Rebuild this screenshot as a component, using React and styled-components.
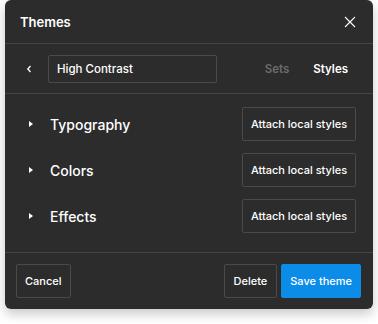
import styled, { createGlobalStyle } from "styled-components";

const GlobalStyle = createGlobalStyle`
  body {
    margin: 0;
    background: #ffffff;
    font-family: Inter, "Noto Sans", sans-serif;
    -webkit-font-smoothing: antialiased;
  }
`;

const Page = styled.div`
  padding: 0 5px 14px 5px;
`;

const Dialog = styled.div`
  width: 368px;
  background: #2c2c2c;
  border-radius: 6px;
  box-shadow: 0 5px 12px rgba(0, 0, 0, 0.22);
  color: #ffffff;
  overflow: hidden;
`;

const Header = styled.div`
  height: 43px;
  display: flex;
  align-items: center;
  justify-content: space-between;
  padding: 0 16px 0 15px;
  border-bottom: 1px solid #444444;
`;

const Title = styled.h1`
  margin: 0;
  font-size: 13px;
  font-weight: 600;
`;

const IconButton = styled.button`
  background: none;
  border: none;
  padding: 0;
  display: flex;
  align-items: center;
  justify-content: center;
  color: #ffffff;
  width: ${(p) => p.size || 16}px;
  height: ${(p) => p.size || 16}px;
`;

const Toolbar = styled.div`
  height: 49px;
  display: flex;
  align-items: center;
  padding: 0 25px 0 19px;
  border-bottom: 1px solid #444444;
`;

const NameInput = styled.div`
  margin-left: 14px;
  width: 169px;
  height: 28px;
  box-sizing: border-box;
  border: 1px solid #4a4a4a;
  border-radius: 2px;
  display: flex;
  align-items: center;
  padding-left: 8px;
  font-size: 11.5px;
  font-weight: 500;
`;

const Tabs = styled.div`
  margin-left: auto;
  display: flex;
  gap: 24px;
`;

const Tab = styled.span`
  font-size: 11.5px;
  font-weight: 600;
  color: ${(p) => (p.active ? "#ffffff" : "#6b6b6b")};
`;

const Sections = styled.div`
  padding: 13px 17px 19px 20px;
  display: flex;
  flex-direction: column;
  gap: 12px;
  border-bottom: 1px solid #444444;
`;

const SectionRow = styled.div`
  height: 34px;
  display: flex;
  align-items: center;
`;

const Caret = styled.span`
  width: 0;
  height: 0;
  margin-left: 4px;
  border-top: 3px solid transparent;
  border-bottom: 3px solid transparent;
  border-left: 4px solid #ffffff;
`;

const SectionName = styled.span`
  margin-left: 17px;
  font-size: 14px;
  font-weight: 550;
`;

const Button = styled.button`
  height: 34px;
  box-sizing: border-box;
  padding: 0 ${(p) => p.px || 8}px;
  border-radius: 2px;
  border: 1px solid ${(p) => (p.primary ? "#0c8ce9" : "#4a4a4a")};
  background: ${(p) => (p.primary ? "#0c8ce9" : "transparent")};
  color: #ffffff;
  font-family: Inter, "Noto Sans", sans-serif;
  font-size: 11px;
  font-weight: 500;
  cursor: pointer;
`;

const AttachButton = styled(Button)`
  margin-left: auto;
  width: 114px;
  padding: 0;
`;

const Footer = styled.div`
  height: 56px;
  display: flex;
  align-items: center;
  padding: 0 12px 0 11px;
  gap: 4px;
`;

const Spacer = styled.div`
  flex: 1;
`;

const sections = ["Typography", "Colors", "Effects"];

export default function App() {
  return (
    <>
      <GlobalStyle />
      <Page>
        <Dialog>
          <Header>
            <Title>Themes</Title>
            <IconButton size={14} aria-label="Close">
              <svg width="12" height="12" viewBox="0 0 12 12">
                <path d="M1 1L11 11M11 1L1 11" stroke="#fff" strokeWidth="1.1" />
              </svg>
            </IconButton>
          </Header>
          <Toolbar>
            <IconButton size={10} aria-label="Back">
              <svg width="6" height="8" viewBox="0 0 6 8">
                <path d="M4.5 1L1.8 4L4.5 7" stroke="#fff" strokeWidth="1.3" fill="none" />
              </svg>
            </IconButton>
            <NameInput>High Contrast</NameInput>
            <Tabs>
              <Tab>Sets</Tab>
              <Tab active>Styles</Tab>
            </Tabs>
          </Toolbar>
          <Sections>
            {sections.map((name) => (
              <SectionRow key={name}>
                <Caret />
                <SectionName>{name}</SectionName>
                <AttachButton>Attach local styles</AttachButton>
              </SectionRow>
            ))}
          </Sections>
          <Footer>
            <Button px={8}>Cancel</Button>
            <Spacer />
            <Button px={9}>Delete</Button>
            <Button px={8} primary>Save theme</Button>
          </Footer>
        </Dialog>
      </Page>
    </>
  );
}
